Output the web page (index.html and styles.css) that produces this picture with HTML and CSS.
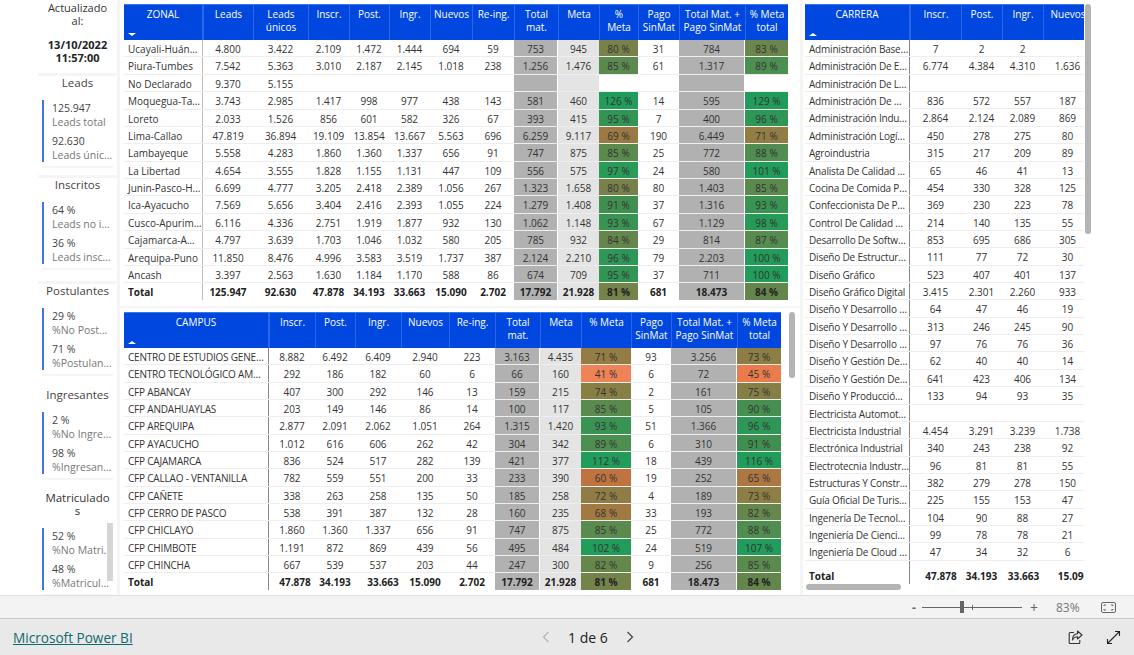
FILE: index.html
```html
<!DOCTYPE html>
<html lang="es">
<head>
<meta charset="utf-8">
<title>Microsoft Power BI</title>
<link rel="stylesheet" href="styles.css">
</head>
<body>
<main class="main">
<aside class="side">
  <div class="stamp"><p>Actualizado<br>al:</p><p class="date">13/10/2022 11:57:00</p></div>
  <section class="sec s1"><h2>Leads</h2><div class="kpi"><b>125.947</b><span>Leads total</span><b>92.630</b><span>Leads únic…</span></div></section>
  <section class="sec s2"><h2>Inscritos</h2><div class="kpi"><b>64 %</b><span>Leads no i…</span><b>36 %</b><span>Leads insc…</span></div></section>
  <section class="sec s3"><h2>Postulantes</h2><div class="kpi"><b>29 %</b><span>%No Post…</span><b>71 %</b><span>%Postulan…</span></div></section>
  <section class="sec s4"><h2>Ingresantes</h2><div class="kpi"><b>2 %</b><span>%No Ingre…</span><b>98 %</b><span>%Ingresan…</span></div></section>
  <section class="sec s5"><h2>Matriculado<br>s</h2><div class="kpi"><b>52 %</b><span>%No Matri…</span><b>48 %</b><span>%Matricul…</span></div><div class="rail"></div></section>
</aside>
<div class="center">
<section class="panel top">
<div class="tb t1">
<div class="r hd"><div class="k">ZONAL<i class="down"></i></div><div>Leads</div><div>Leads únicos</div><div>Inscr.</div><div>Post.</div><div>Ingr.</div><div>Nuevos</div><div>Re-ing.</div><div>Total mat.</div><div>Meta</div><div>%<br>Meta</div><div>Pago SinMat</div><div>Total Mat. + Pago SinMat</div><div>% Meta total</div></div>
<div class="r"><div class="k">Ucayali-Huán…</div><div>4.800</div><div>3.422</div><div>2.109</div><div>1.472</div><div>1.444</div><div>694</div><div>59</div><div class="g">753</div><div class="l">945</div><div class="p80">80 %</div><div>31</div><div class="g">784</div><div class="p83">83 %</div></div>
<div class="r"><div class="k">Piura-Tumbes</div><div>7.542</div><div>5.363</div><div>3.010</div><div>2.187</div><div>2.145</div><div>1.018</div><div>238</div><div class="g">1.256</div><div class="l">1.476</div><div class="p85">85 %</div><div>61</div><div class="g">1.317</div><div class="p89">89 %</div></div>
<div class="r"><div class="k">No Declarado</div><div>9.370</div><div>5.155</div><div></div><div></div><div></div><div></div><div></div><div class="g"></div><div class="l"></div><div></div><div></div><div class="g"></div><div></div></div>
<div class="r"><div class="k">Moquegua-Ta…</div><div>3.743</div><div>2.985</div><div>1.417</div><div>998</div><div>977</div><div>438</div><div>143</div><div class="g">581</div><div class="l">460</div><div class="p100">126 %</div><div>14</div><div class="g">595</div><div class="p100">129 %</div></div>
<div class="r"><div class="k">Loreto</div><div>2.033</div><div>1.526</div><div>856</div><div>601</div><div>582</div><div>326</div><div>67</div><div class="g">393</div><div class="l">415</div><div class="p95">95 %</div><div>7</div><div class="g">400</div><div class="p96">96 %</div></div>
<div class="r"><div class="k">Lima-Callao</div><div>47.819</div><div>36.894</div><div>19.109</div><div>13.854</div><div>13.667</div><div>5.563</div><div>696</div><div class="g">6.259</div><div class="l">9.117</div><div class="p69">69 %</div><div>190</div><div class="g">6.449</div><div class="p71">71 %</div></div>
<div class="r"><div class="k">Lambayeque</div><div>5.558</div><div>4.283</div><div>1.860</div><div>1.360</div><div>1.337</div><div>656</div><div>91</div><div class="g">747</div><div class="l">875</div><div class="p85">85 %</div><div>25</div><div class="g">772</div><div class="p88">88 %</div></div>
<div class="r"><div class="k">La Libertad</div><div>4.654</div><div>3.555</div><div>1.828</div><div>1.155</div><div>1.131</div><div>447</div><div>109</div><div class="g">556</div><div class="l">575</div><div class="p97">97 %</div><div>24</div><div class="g">580</div><div class="p100">101 %</div></div>
<div class="r"><div class="k">Junin-Pasco-H…</div><div>6.699</div><div>4.777</div><div>3.205</div><div>2.418</div><div>2.389</div><div>1.056</div><div>267</div><div class="g">1.323</div><div class="l">1.658</div><div class="p80">80 %</div><div>80</div><div class="g">1.403</div><div class="p85">85 %</div></div>
<div class="r"><div class="k">Ica-Ayacucho</div><div>7.569</div><div>5.656</div><div>3.404</div><div>2.416</div><div>2.393</div><div>1.055</div><div>224</div><div class="g">1.279</div><div class="l">1.408</div><div class="p91">91 %</div><div>37</div><div class="g">1.316</div><div class="p93">93 %</div></div>
<div class="r"><div class="k">Cusco-Apurim…</div><div>6.116</div><div>4.336</div><div>2.751</div><div>1.919</div><div>1.877</div><div>932</div><div>130</div><div class="g">1.062</div><div class="l">1.148</div><div class="p93">93 %</div><div>67</div><div class="g">1.129</div><div class="p98">98 %</div></div>
<div class="r"><div class="k">Cajamarca-A…</div><div>4.797</div><div>3.639</div><div>1.703</div><div>1.046</div><div>1.032</div><div>580</div><div>205</div><div class="g">785</div><div class="l">932</div><div class="p84">84 %</div><div>29</div><div class="g">814</div><div class="p87">87 %</div></div>
<div class="r"><div class="k">Arequipa-Puno</div><div>11.850</div><div>8.476</div><div>4.996</div><div>3.583</div><div>3.519</div><div>1.737</div><div>387</div><div class="g">2.124</div><div class="l">2.210</div><div class="p96">96 %</div><div>79</div><div class="g">2.203</div><div class="p100">100 %</div></div>
<div class="r"><div class="k">Ancash</div><div>3.397</div><div>2.563</div><div>1.630</div><div>1.184</div><div>1.170</div><div>588</div><div>86</div><div class="g">674</div><div class="l">709</div><div class="p95">95 %</div><div>37</div><div class="g">711</div><div class="p100">100 %</div></div>
<div class="r tot"><div class="k">Total</div><div>125.947</div><div>92.630</div><div>47.878</div><div>34.193</div><div>33.663</div><div>15.090</div><div>2.702</div><div class="g">17.792</div><div class="l">21.928</div><div class="p81">81 %</div><div>681</div><div class="g">18.473</div><div class="p84">84 %</div></div>
</div>
</section>
<section class="panel bottom">
<div class="tb t2">
<div class="r hd"><div class="k">CAMPUS<i class="up"></i></div><div>Inscr.</div><div>Post.</div><div>Ingr.</div><div>Nuevos</div><div>Re-ing.</div><div>Total mat.</div><div>Meta</div><div>% Meta</div><div>Pago SinMat</div><div>Total Mat. + Pago SinMat</div><div>% Meta total</div></div>
<div class="r"><div class="k">CENTRO DE ESTUDIOS GENE…</div><div>8.882</div><div>6.492</div><div>6.409</div><div>2.940</div><div>223</div><div class="g">3.163</div><div class="l">4.435</div><div class="p71">71 %</div><div>93</div><div class="g">3.256</div><div class="p73">73 %</div></div>
<div class="r"><div class="k">CENTRO TECNOLÓGICO AM…</div><div>292</div><div>186</div><div>182</div><div>60</div><div>6</div><div class="g">66</div><div class="l">160</div><div class="p41">41 %</div><div>6</div><div class="g">72</div><div class="p45">45 %</div></div>
<div class="r"><div class="k">CFP ABANCAY</div><div>407</div><div>300</div><div>292</div><div>146</div><div>13</div><div class="g">159</div><div class="l">215</div><div class="p74">74 %</div><div>2</div><div class="g">161</div><div class="p75">75 %</div></div>
<div class="r"><div class="k">CFP ANDAHUAYLAS</div><div>203</div><div>149</div><div>146</div><div>86</div><div>14</div><div class="g">100</div><div class="l">117</div><div class="p85">85 %</div><div>5</div><div class="g">105</div><div class="p90">90 %</div></div>
<div class="r"><div class="k">CFP AREQUIPA</div><div>2.877</div><div>2.091</div><div>2.062</div><div>1.051</div><div>264</div><div class="g">1.315</div><div class="l">1.420</div><div class="p93">93 %</div><div>51</div><div class="g">1.366</div><div class="p96">96 %</div></div>
<div class="r"><div class="k">CFP AYACUCHO</div><div>1.012</div><div>616</div><div>606</div><div>262</div><div>42</div><div class="g">304</div><div class="l">342</div><div class="p89">89 %</div><div>6</div><div class="g">310</div><div class="p91">91 %</div></div>
<div class="r"><div class="k">CFP CAJAMARCA</div><div>836</div><div>524</div><div>517</div><div>282</div><div>139</div><div class="g">421</div><div class="l">377</div><div class="p100">112 %</div><div>18</div><div class="g">439</div><div class="p100">116 %</div></div>
<div class="r"><div class="k">CFP CALLAO - VENTANILLA</div><div>782</div><div>559</div><div>551</div><div>200</div><div>33</div><div class="g">233</div><div class="l">390</div><div class="p60">60 %</div><div>19</div><div class="g">252</div><div class="p65">65 %</div></div>
<div class="r"><div class="k">CFP CAÑETE</div><div>338</div><div>263</div><div>258</div><div>135</div><div>50</div><div class="g">185</div><div class="l">258</div><div class="p72">72 %</div><div>4</div><div class="g">189</div><div class="p73">73 %</div></div>
<div class="r"><div class="k">CFP CERRO DE PASCO</div><div>538</div><div>391</div><div>387</div><div>132</div><div>28</div><div class="g">160</div><div class="l">235</div><div class="p68">68 %</div><div>33</div><div class="g">193</div><div class="p82">82 %</div></div>
<div class="r"><div class="k">CFP CHICLAYO</div><div>1.860</div><div>1.360</div><div>1.337</div><div>656</div><div>91</div><div class="g">747</div><div class="l">875</div><div class="p85">85 %</div><div>25</div><div class="g">772</div><div class="p88">88 %</div></div>
<div class="r"><div class="k">CFP CHIMBOTE</div><div>1.191</div><div>872</div><div>869</div><div>439</div><div>56</div><div class="g">495</div><div class="l">484</div><div class="p100">102 %</div><div>24</div><div class="g">519</div><div class="p100">107 %</div></div>
<div class="r"><div class="k">CFP CHINCHA</div><div>667</div><div>539</div><div>537</div><div>203</div><div>44</div><div class="g">247</div><div class="l">300</div><div class="p82">82 %</div><div>9</div><div class="g">256</div><div class="p85">85 %</div></div>
<div class="r tot"><div class="k">Total</div><div>47.878</div><div>34.193</div><div>33.663</div><div>15.090</div><div>2.702</div><div class="g">17.792</div><div class="l">21.928</div><div class="p81">81 %</div><div>681</div><div class="g">18.473</div><div class="p84">84 %</div></div>
</div>
<div class="bar bar-mid"></div>
</section>
</div>
<section class="panel right">
<div class="tb t3">
<div class="r hd"><div class="k">CARRERA<i class="up"></i></div><div>Inscr.</div><div>Post.</div><div>Ingr.</div><div>Nuevos</div></div>
<div class="scroll">
<div class="r"><div class="k">Administración Base…</div><div>7</div><div>2</div><div>2</div><div></div></div>
<div class="r"><div class="k">Administración De E…</div><div>6.774</div><div>4.384</div><div>4.310</div><div>1.636</div></div>
<div class="r"><div class="k">Administración De L…</div><div></div><div></div><div></div><div></div></div>
<div class="r"><div class="k">Administración De …</div><div>836</div><div>572</div><div>557</div><div>187</div></div>
<div class="r"><div class="k">Administración Indu…</div><div>2.864</div><div>2.124</div><div>2.089</div><div>869</div></div>
<div class="r"><div class="k">Administración Logí…</div><div>450</div><div>278</div><div>275</div><div>80</div></div>
<div class="r"><div class="k">Agroindustria</div><div>315</div><div>217</div><div>209</div><div>89</div></div>
<div class="r"><div class="k">Analista De Calidad …</div><div>65</div><div>46</div><div>41</div><div>13</div></div>
<div class="r"><div class="k">Cocina De Comida P…</div><div>454</div><div>330</div><div>328</div><div>125</div></div>
<div class="r"><div class="k">Confeccionista De P…</div><div>369</div><div>230</div><div>223</div><div>78</div></div>
<div class="r"><div class="k">Control De Calidad …</div><div>214</div><div>140</div><div>135</div><div>55</div></div>
<div class="r"><div class="k">Desarrollo De Softw…</div><div>853</div><div>695</div><div>686</div><div>305</div></div>
<div class="r"><div class="k">Diseño De Estructur…</div><div>111</div><div>77</div><div>72</div><div>30</div></div>
<div class="r"><div class="k">Diseño Gráfico</div><div>523</div><div>407</div><div>401</div><div>137</div></div>
<div class="r"><div class="k">Diseño Gráfico Digital</div><div>3.415</div><div>2.301</div><div>2.260</div><div>933</div></div>
<div class="r"><div class="k">Diseño Y Desarrollo …</div><div>64</div><div>47</div><div>46</div><div>19</div></div>
<div class="r"><div class="k">Diseño Y Desarrollo …</div><div>313</div><div>246</div><div>245</div><div>90</div></div>
<div class="r"><div class="k">Diseño Y Desarrollo …</div><div>97</div><div>76</div><div>76</div><div>36</div></div>
<div class="r"><div class="k">Diseño Y Gestión De…</div><div>62</div><div>40</div><div>40</div><div>14</div></div>
<div class="r"><div class="k">Diseño Y Gestión De…</div><div>641</div><div>423</div><div>406</div><div>134</div></div>
<div class="r"><div class="k">Diseño Y Producció…</div><div>133</div><div>94</div><div>93</div><div>35</div></div>
<div class="r"><div class="k">Electricista Automot…</div><div></div><div></div><div></div><div></div></div>
<div class="r"><div class="k">Electricista Industrial</div><div>4.454</div><div>3.291</div><div>3.239</div><div>1.738</div></div>
<div class="r"><div class="k">Electrónica Industrial</div><div>340</div><div>243</div><div>238</div><div>92</div></div>
<div class="r"><div class="k">Electrotecnia Industr…</div><div>96</div><div>81</div><div>81</div><div>55</div></div>
<div class="r"><div class="k">Estructuras Y Constr…</div><div>382</div><div>279</div><div>278</div><div>150</div></div>
<div class="r"><div class="k">Guía Oficial De Turis…</div><div>225</div><div>155</div><div>153</div><div>47</div></div>
<div class="r"><div class="k">Ingenería De Tecnol…</div><div>104</div><div>90</div><div>88</div><div>27</div></div>
<div class="r"><div class="k">Ingeniería De Cienci…</div><div>99</div><div>78</div><div>78</div><div>21</div></div>
<div class="r"><div class="k">Ingeniería De Cloud …</div><div>47</div><div>34</div><div>32</div><div>6</div></div>
<div class="r clip"><div class="k">·</div><div></div><div></div><div></div><div></div></div>
</div>
<div class="r tot"><div class="k">Total</div><div>47.878</div><div>34.193</div><div>33.663</div><div>15.090</div></div>
</div>
<div class="bar bar-right"></div>
<div class="hbar"></div>
</section>
</main>
<div class="zoombar">
  <span class="zm">-</span>
  <div class="slider"><i class="tick"></i><i class="thumb"></i></div>
  <span class="zp">+</span>
  <span class="pct">83%</span>
  <svg class="fit" width="15" height="11" viewBox="0 0 15 11"><rect x=".5" y=".5" width="14" height="10" rx="1.5" fill="none" stroke="#666"/><path d="M3 4V3h2M12 4V3h-2M3 7v1h2M12 7v1h-2" fill="none" stroke="#666"/></svg>
</div>
<footer class="foot">
  <a class="brand" href="#">Microsoft Power BI</a>
  <nav class="pager">
    <svg width="8" height="12" viewBox="0 0 8 12"><path d="M6.500 1 1.500 6l5 5" fill="none" stroke="#b4b4b4" stroke-width="1.200"/></svg>
    <span>1 de 6</span>
    <svg width="8" height="12" viewBox="0 0 8 12"><path d="M1.500 1l5 5-5 5" fill="none" stroke="#444" stroke-width="1.200"/></svg>
  </nav>
  <div class="tools">
    <svg width="15" height="15" viewBox="0 0 15 15"><path d="M6 2.500H2.200a1 1 0 0 0-1 1v9a1 1 0 0 0 1 1h8.600a1 1 0 0 0 1-1V10" fill="none" stroke="#333" stroke-width="1.100"/><path d="M9.500 1 14 5l-4.500 4V6.800C7 6.800 5.500 7.800 4.500 10c0-4 2-6 5-6.200z" fill="none" stroke="#333" stroke-width="1.100" stroke-linejoin="round"/></svg>
    <svg width="15" height="15" viewBox="0 0 15 15"><path d="M9 1.500h4.500V6M13.500 1.500l-12 12M1.500 9v4.500H6" fill="none" stroke="#222" stroke-width="1.100"/></svg>
  </div>
</footer>
</body>
</html>
```
FILE: styles.css
```css
*{box-sizing:border-box}
html,body{margin:0;padding:0}
body{width:1134px;height:655px;overflow:hidden;background:#fff;color:#333;font-family:"Open Sans","Noto Sans",sans-serif;font-size:10px;display:flex;flex-direction:column}
.main{height:595px;display:flex;flex:none;overflow:hidden;background:#f5f5f5}
.side{width:117px;flex:none;padding-left:38px;margin-right:3px;background:#fff;overflow:hidden}
.stamp{height:73px;text-align:center;font-size:11px;line-height:13px;padding-top:1px}
.stamp p{margin:0}
.stamp .date{font-weight:700;margin-top:11px;font-size:11px;padding:0 8px;color:#222}
.sec{position:relative;border-top:3px solid #f5f5f5}
.sec h2{margin:0;font-size:11.5px;line-height:13px;font-weight:400;text-align:center;height:18px;color:#444}
.kpi{margin:6px 4px 4px;padding-left:8px;border-left:2px solid #4672e8;height:62px;display:flex;flex-direction:column;white-space:nowrap;overflow:hidden}
.kpi b{font-weight:400;font-size:10.5px;line-height:16px;color:#444}
.kpi span{font-size:10.5px;line-height:13px;color:#777;margin-bottom:4px}
.sec::after{content:"";display:block;height:2px;margin:0 4px;background:#f5f5f5}
.s1{margin-bottom:7px}
.s2{margin-bottom:11px}
.s3{margin-bottom:9px}
.s4{margin-bottom:8px;border-top-color:#fff}
.s5{border-top-color:#fff}
.s5 h2{height:31px;color:#333}
.rail{position:absolute;right:4px;top:32px;width:6px;height:58px;background:#d6d6d6}
.center{width:680px;flex:none;display:flex;flex-direction:column;margin-right:3px}
.panel{background:#fff;position:relative;padding:4px 0 0 4px}
.top{height:306px;flex:none}
.bottom{height:287px;flex:none;margin-top:2px}
.right{width:331px;flex:none;padding-left:2px;overflow:hidden}
.tb{width:664px;line-height:16px}
.t2{width:657px}
.t3{width:279px;overflow:hidden}
.r{display:grid;height:17.38px;border-bottom:1px solid #eee;white-space:nowrap}
.r>div{text-align:center;overflow:hidden;line-height:19px;min-width:0}
.r>.k{text-align:left;padding-left:4px;border-right:1px solid #bbb}
.t2 .r>.k,.t3 .r>.k{border-right-color:#888;letter-spacing:-.2px}
.t1 .r{grid-template-columns:79px 50px 55px 41px 40px 41px 42px 42px 44px 41px 39px 41px 66px 43px}
.t2 .r{height:17.35px;grid-template-columns:145px 46px 40px 46px 48px 46px 45px 41px 50px 40px 66px 44px}
.t3 .r{grid-template-columns:105px 51px 41px 41px 49px;width:287px;height:17.37px}
.r.hd,.t1 .r.hd,.t2 .r.hd,.t3 .r.hd{height:36px;background:#0047e0;color:#fff;border:0;border-top:1px solid #3a74ea;white-space:normal}
.r.hd>div{padding:3px 1px 0;line-height:13px;border-left:1px solid #2a66e8;overflow:visible;position:relative;height:35px}
.r.hd>.k,.t2 .r.hd>.k,.t3 .r.hd>.k{text-align:center;border-left:0;border-right:1px solid #2a66e8;letter-spacing:0}
.hd i{position:absolute;left:4px;bottom:4px;width:0;height:0;border-left:4px solid transparent;border-right:4px solid transparent}
.down{border-top:3px solid #fff}
.up{border-bottom:3px solid #fff}
.scroll{height:527px;overflow:hidden}
.r.tot,.t1 .r.tot,.t2 .r.tot,.t3 .r.tot{font-weight:700;color:#222;border-bottom:0;height:17px;letter-spacing:0}
.t2 .r.tot>.k,.t3 .r.tot>.k{letter-spacing:0}
.t2 .tot>div:nth-child(2){padding-left:6px}
.t2 .tot>div:nth-child(4){padding-left:10px}
.t3 .tot>div:nth-child(2){padding-left:11px}
.t3 .tot>div:nth-child(4){padding-left:2px}
.t3 .tot>div:nth-child(5){padding-left:12px}
.clip>.k{padding-left:42px}
.t3 .clip>.k{line-height:13px}
.g{background:#b1b1b1;margin-right:1px}
.l{background:#e4e4e4}
.p41{background:#ee8358}.p45{background:#ea7b4c}.p60{background:#bf7340}.p65{background:#ac7741}.p68{background:#a07a42}.p69{background:#9a7a42}
.p71{background:#947c45}.p72{background:#8f7d45}.p73{background:#8c7e44}.p74{background:#887f44}.p75{background:#857f45}
.p80{background:#78814a}.p81{background:#73834a}.p82{background:#65874b}.p83{background:#6a864c}.p84{background:#64864c}.p85{background:#5b8a4e}
.p87{background:#568c4f}.p88{background:#508d50}.p89{background:#4d8f50}.p90{background:#468f50}.p91{background:#3f9050}.p93{background:#399353}
.p95{background:#329555}.p96{background:#2e9757}.p97{background:#2a9a57}.p98{background:#289a58}.p100{background:#219c5a}
.bar{position:absolute;width:6px;border-radius:3px;background:#b3b3b3}
.bar-mid{left:669px;top:4px;height:66px}
.bar-right{left:282px;top:4px;height:230px}
.hbar{position:absolute;left:3px;top:584px;width:95px;height:6px;border-radius:3px;background:#b3b3b3}
.zoombar{height:24px;flex:none;background:#f3f3f3;border-top:1px solid #e0e0e0;border-bottom:1px solid #c9c9c9;display:flex;align-items:center;color:#666;padding-left:912px;font-size:12px}
.zm{width:10px;font-weight:700}
.slider{width:100px;height:1px;background:#666;position:relative}
.thumb{position:absolute;left:38px;top:-6px;width:4px;height:12px;background:#666}
.tick{position:absolute;left:50px;top:-2px;width:1px;height:5px;background:#666}
.zp{margin-left:6px;font-size:14px;width:12px;text-align:center}
.pct{margin-left:16px;font-size:12px;color:#777;width:24px}
.fit{margin-left:21px}
.foot{flex:1;background:#e9e9e9;display:flex;align-items:center;padding:0 13px;position:relative}
.brand{color:#0f6a6e;font-size:13.6px;text-decoration:underline;width:529px}
.pager{display:flex;align-items:center;font-size:14px;color:#222;gap:18px}
.tools{margin-left:auto;display:flex;gap:23px}
```
